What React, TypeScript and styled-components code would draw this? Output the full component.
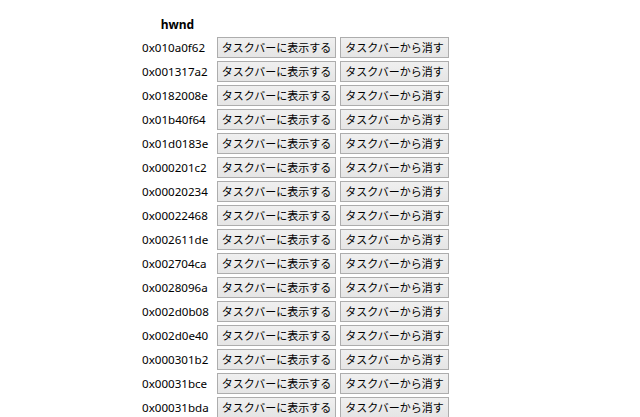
import React from "react";
import styled, { createGlobalStyle } from "styled-components";

const Global = createGlobalStyle`
  html, body { margin: 0; padding: 0; background: #ffffff; }
  body { font-family: "Noto Sans", "Noto Sans CJK JP", sans-serif; color: #000; }
`;

const Page = styled.div`
  padding: 12px 0 0 139px;
`;

const Table = styled.table`
  border-collapse: separate;
  border-spacing: 2px 1px;
  font-size: 11.6px;
`;

const Th = styled.th`
  font-size: 12px;
  font-weight: bold;
  padding: 1px;
  height: 20px;
  text-align: center;
`;

const Td = styled.td`
  padding: 1px;
  white-space: nowrap;
  vertical-align: middle;
`;

const HwndCell = styled(Td)`
  padding-right: 5px;
`;

const Button = styled.button`
  display: block;
  font-family: "Noto Sans CJK JP", sans-serif;
  font-size: 11px;
  height: 21px;
  padding: 0 4px;
  margin: 0;
  border: 1px solid #adadad;
  border-radius: 0;
  background: linear-gradient(#f0f0f0, #e5e5e5);
  color: #000;
  line-height: 19px;
  cursor: pointer;
`;

const hwnds = [
  "0x010a0f62",
  "0x001317a2",
  "0x0182008e",
  "0x01b40f64",
  "0x01d0183e",
  "0x000201c2",
  "0x00020234",
  "0x00022468",
  "0x002611de",
  "0x002704ca",
  "0x0028096a",
  "0x002d0b08",
  "0x002d0e40",
  "0x000301b2",
  "0x00031bce",
  "0x00031bda",
];

export default function App() {
  return (
    <>
      <Global />
      <Page>
        <Table>
          <thead>
            <tr>
              <Th>hwnd</Th>
              <Th></Th>
              <Th></Th>
            </tr>
          </thead>
          <tbody>
            {hwnds.map((h) => (
              <tr key={h}>
                <HwndCell>{h}</HwndCell>
                <Td>
                  <Button>タスクバーに表示する</Button>
                </Td>
                <Td>
                  <Button>タスクバーから消す</Button>
                </Td>
              </tr>
            ))}
          </tbody>
        </Table>
      </Page>
    </>
  );
}
